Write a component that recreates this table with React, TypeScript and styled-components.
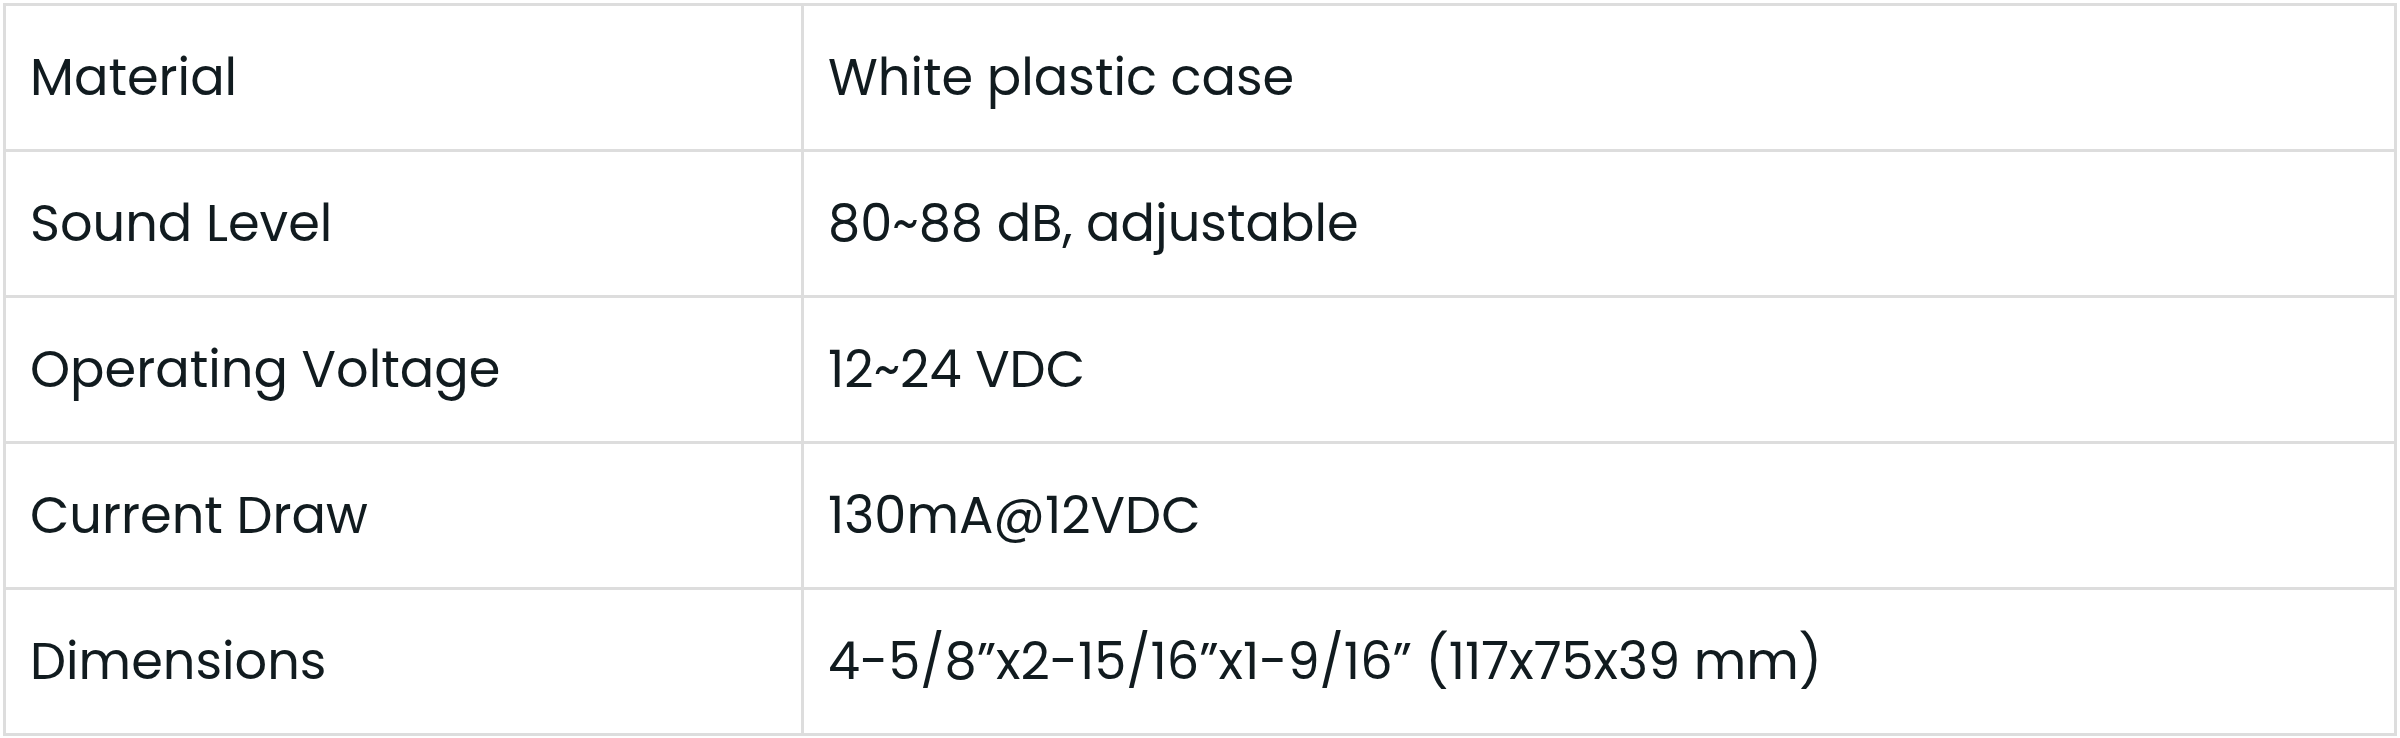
import React from 'react';
import styled, { createGlobalStyle } from 'styled-components';

const specs = [
  { label: 'Material', value: 'White plastic case' },
  { label: 'Sound Level', value: '80~88 dB, adjustable' },
  { label: 'Operating Voltage', value: '12~24 VDC' },
  { label: 'Current Draw', value: '130mA@12VDC' },
  { label: 'Dimensions', value: '4-5/8”x2-15/16”x1-9/16” (117x75x39 mm)' },
];

const GlobalStyle = createGlobalStyle`
  html, body {
    margin: 0;
    background: #fff;
  }
`;

const Wrapper = styled.div`
  padding: 3px;
`;

const SpecTable = styled.table`
  width: 100%;
  border-collapse: collapse;
  font-family: Poppins, Inter, 'Liberation Sans', sans-serif;
  font-size: 51px;
  color: #111b1f;
`;

const Row = styled.tr`
  height: 146px;
`;

const Cell = styled.td<{ $label?: boolean }>`
  border: 3px solid #dddddd;
  padding: 0 24px;
  vertical-align: middle;
  width: ${(p) => (p.$label ? '747px' : 'auto')};
  white-space: nowrap;
`;

const App: React.FC = () => {
  return (
    <>
      <GlobalStyle />
      <Wrapper>
        <SpecTable>
          <tbody>
            {specs.map((spec) => (
              <Row key={spec.label}>
                <Cell $label>{spec.label}</Cell>
                <Cell>{spec.value}</Cell>
              </Row>
            ))}
          </tbody>
        </SpecTable>
      </Wrapper>
    </>
  );
};

export default App;
